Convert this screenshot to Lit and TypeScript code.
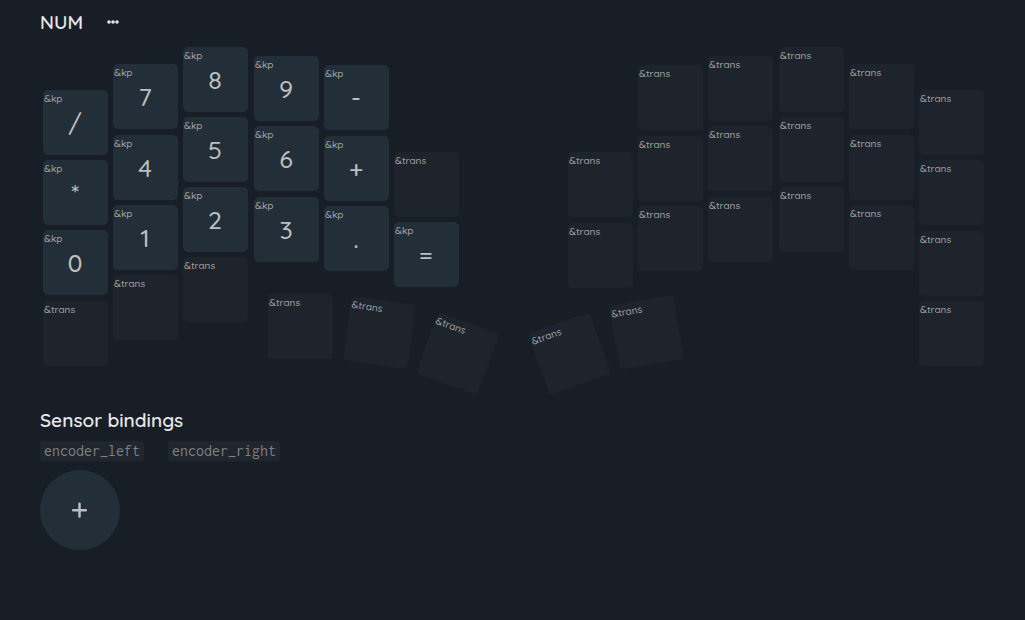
import { LitElement, html, css, nothing } from "lit";
import { customElement, property } from "lit/decorators.js";
import { styleMap } from "lit/directives/style-map.js";

interface Key {
  x: number;
  y: number;
  behavior: string;
  value?: string;
  rotate?: number;
}

const kp = (x: number, y: number, value: string): Key => ({ x, y, behavior: "&kp", value });
const trans = (x: number, y: number, rotate = 0): Key => ({ x, y, rotate, behavior: "&trans" });

// Physical layout: key origins relative to the top left corner of the board.
const KEYS: Key[] = [
  kp(0, 43, "/"), kp(0, 113, "*"), kp(0, 183, "0"), trans(0, 254),
  kp(70, 17, "7"), kp(70, 88, "4"), kp(70, 158, "1"), trans(70, 228),
  kp(140, 0, "8"), kp(140, 70, "5"), kp(140, 140, "2"), trans(140, 210),
  kp(211, 9, "9"), kp(211, 79, "6"), kp(211, 150, "3"),
  kp(281, 18, "-"), kp(281, 89, "+"), kp(281, 159, "."),
  trans(351, 105), kp(351, 175, "="),
  trans(225, 247), trans(304, 253, 8), trans(382, 274, 20),
  trans(494, 274, -20), trans(571, 253, -10),
  trans(525, 105), trans(525, 176),
  trans(595, 18), trans(595, 89), trans(595, 159),
  trans(665, 9), trans(665, 79), trans(665, 150),
  trans(736, 0), trans(736, 70), trans(736, 140),
  trans(806, 17), trans(806, 88), trans(806, 158),
  trans(876, 43), trans(876, 113), trans(876, 184), trans(876, 254),
];

@customElement("key-cap")
export class KeyCap extends LitElement {
  @property() behavior = "";
  @property() value?: string;

  static styles = css`
    :host {
      display: block;
      width: 65px;
      height: 65px;
    }
    .cap {
      display: grid;
      grid-template-rows: 18px 30px 17px;
      width: 100%;
      height: 100%;
      padding: 0;
      border: 0;
      border-radius: 5px;
      background: #1d242b;
      color: #bebebe;
      font-family: Quicksand, Lato, sans-serif;
      font-weight: 500;
      text-align: left;
      cursor: pointer;
    }
    .bound {
      background: #232f38;
    }
    .cap:hover {
      background: #2b3a45;
    }
    .behavior {
      padding-left: 1px;
      font-size: 10px;
      line-height: 18px;
      color: #a2a3a4;
    }
    .value {
      padding-right: 1px;
      font-size: 25px;
      line-height: 30px;
      text-align: center;
    }
  `;

  render() {
    return html`<button class="cap ${this.value ? "bound" : ""}" type="button">
      <span class="behavior">${this.behavior}</span>
      ${this.value ? html`<span class="value">${this.value}</span>` : nothing}
    </button>`;
  }
}

@customElement("app-root")
export class AppRoot extends LitElement {
  static styles = css`
    :host {
      display: block;
      box-sizing: border-box;
      min-height: 100vh;
      padding: 8px 40px;
      background: #181e25;
      color: #e6e6e6;
      font-family: Quicksand, Lato, sans-serif;
    }
    .header {
      display: flex;
      align-items: center;
      gap: 24px;
      height: 28px;
    }
    .title {
      margin: 0;
      font-size: 19px;
      line-height: 28px;
      font-weight: 600;
    }
    .menu {
      display: flex;
      padding: 0;
      border: 0;
      background: none;
      color: inherit;
      cursor: pointer;
    }
    .board {
      position: relative;
      height: 348px;
      margin: 11px 0 11px 3px;
    }
    .key {
      position: absolute;
    }
    .encoders {
      display: flex;
      align-items: flex-start;
      gap: 24px;
      margin-top: 7px;
    }
    .encoder {
      display: flex;
      flex-direction: column;
      align-items: flex-start;
      gap: 9px;
    }
    .name {
      padding: 0 4px;
      border-radius: 2px;
      background: #20262d;
      color: #7d8083;
      font-family: Inconsolata, "DejaVu Sans Mono", monospace;
      font-size: 16px;
      line-height: 20px;
    }
    .add {
      display: grid;
      place-items: center;
      width: 80px;
      height: 80px;
      padding: 0;
      border: 0;
      border-radius: 50%;
      background: #232f38;
      color: #bebebe;
      cursor: pointer;
    }
  `;

  render() {
    return html`
      <header class="header">
        <h2 class="title">NUM</h2>
        <button class="menu" type="button" aria-label="Layer menu">
          <svg width="12" height="4" viewBox="0 0 12 4" fill="currentColor">
            <circle cx="2" cy="2" r="1.8" /><circle cx="6" cy="2" r="1.8" /><circle cx="10" cy="2" r="1.8" />
          </svg>
        </button>
      </header>
      <main>
        <div class="board">
          ${KEYS.map(
            (k) => html`<key-cap
              class="key"
              .behavior=${k.behavior}
              .value=${k.value}
              style=${styleMap({
                left: `${k.x}px`,
                top: `${k.y}px`,
                ...(k.rotate ? { transform: `rotate(${k.rotate}deg)` } : {}),
              })}
            ></key-cap>`
          )}
        </div>
        <h2 class="title">Sensor bindings</h2>
        <div class="encoders">
          <div class="encoder">
            <code class="name">encoder_left</code>
            <button class="add" type="button" aria-label="Add binding">
              <svg width="16" height="16" viewBox="0 0 16 16" stroke="currentColor" stroke-width="2.5" stroke-linecap="round">
                <path d="M7.5 1.8v12.6M1.2 8.2h12.6" />
              </svg>
            </button>
          </div>
          <div class="encoder">
            <code class="name">encoder_right</code>
          </div>
        </div>
      </main>
    `;
  }
}
